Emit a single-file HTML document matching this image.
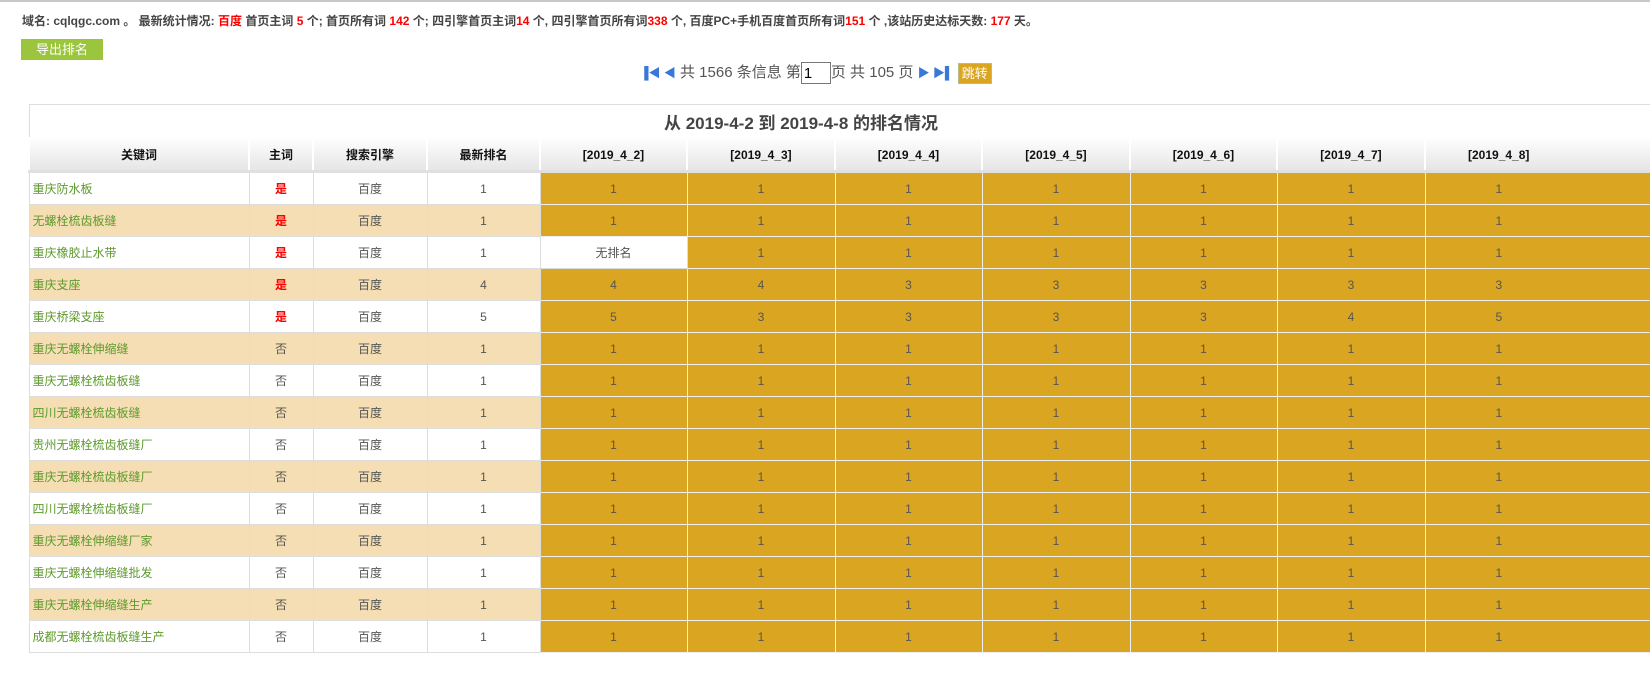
<!DOCTYPE html>
<html><head><meta charset="utf-8"><style>
body{margin:0;width:1650px;height:688px;overflow:hidden;background:#fff;font-family:"Liberation Sans","Noto Sans CJK SC",sans-serif;font-size:12px;color:#333;position:relative;border-top:2px solid #c8c8c8;box-sizing:border-box}
.info{position:absolute;left:22px;top:10px;font-weight:bold;font-size:12px;color:#444;white-space:nowrap}
.r{color:#f00}
.btn{position:absolute;left:21px;top:37px;width:82px;height:21px;background:#9ac53d;color:#fff;font-size:13px;text-align:center;line-height:21px}
.pager{position:absolute;left:640px;top:60px;font-size:15px;color:#555;white-space:nowrap;height:22px;line-height:22px}
.pager input{width:30px;font-size:15px;padding:0 2px;vertical-align:middle;margin:0;box-sizing:border-box;height:22px;border:1px solid #777}
.tri{color:#3a78d8;font-size:12px}
.jump{display:inline-block;background:#daa520;color:#fff;font-size:13px;padding:0 3px;line-height:19px;border:1px solid #bb8;vertical-align:middle}
table{position:absolute;left:28px;top:102px;border-collapse:collapse;width:1700px;table-layout:fixed}
td,th{border:1px solid #ddd;text-align:center;height:31px;padding:0;font-size:12px;color:#555}
th{background:linear-gradient(#fdfdfd,#e6e6e6);color:#111;font-weight:bold;font-size:12px;border:2px solid #fff;border-bottom:3px solid #e0e0e0}
.title{font-size:17px;font-weight:bold;color:#444;height:32px;border-color:#ddd}
td.k{text-align:left;padding-left:3px;color:#5d9a2c}
td.y{color:#f00;font-weight:bold}
tr.w td{background:#f5deb3}
td.g{background:#daa520!important;color:#555;border-color:#eee}
td.l{text-align:left;padding-left:70px}
</style></head><body>
<div class="info">域名: cqlqgc.com 。 最新统计情况: <span class="r">百度</span> 首页主词 <span class="r">5</span> 个; 首页所有词 <span class="r">142</span> 个; 四引擎首页主词<span class="r">14</span> 个, 四引擎首页所有词<span class="r">338</span> 个, 百度PC+手机百度首页所有词<span class="r">151</span> 个 ,该站历史达标天数: <span class="r">177</span> 天。</div>
<div class="btn">导出排名</div>
<div class="pager"><span class="tri">▐◀ ◀</span> 共 1566 条信息 第<input value="1">页 共 105 页 <span class="tri">▶ ▶▌</span> <span class="jump">跳转</span></div>
<table>
<colgroup><col style="width:220px"><col style="width:64px"><col style="width:114px"><col style="width:113px"><col style="width:147px"><col style="width:148px"><col style="width:147px"><col style="width:148px"><col style="width:147px"><col style="width:148px"><col style="width:304px"></colgroup>
<tr><td colspan="11" class="title"><span style="position:relative;left:-78px">从 2019-4-2 到 2019-4-8 的排名情况</span></td></tr>
<tr><th>关键词</th><th>主词</th><th>搜索引擎</th><th>最新排名</th><th>[2019_4_2]</th><th>[2019_4_3]</th><th>[2019_4_4]</th><th>[2019_4_5]</th><th>[2019_4_6]</th><th>[2019_4_7]</th><th style="text-align:left;padding-left:42px">[2019_4_8]</th></tr>
<tr><td class="k">重庆防水板</td><td class="y">是</td><td>百度</td><td>1</td><td class="g">1</td><td class="g">1</td><td class="g">1</td><td class="g">1</td><td class="g">1</td><td class="g">1</td><td class="g l">1</td></tr>
<tr class="w"><td class="k">无螺栓梳齿板缝</td><td class="y">是</td><td>百度</td><td>1</td><td class="g">1</td><td class="g">1</td><td class="g">1</td><td class="g">1</td><td class="g">1</td><td class="g">1</td><td class="g l">1</td></tr>
<tr><td class="k">重庆橡胶止水带</td><td class="y">是</td><td>百度</td><td>1</td><td>无排名</td><td class="g">1</td><td class="g">1</td><td class="g">1</td><td class="g">1</td><td class="g">1</td><td class="g l">1</td></tr>
<tr class="w"><td class="k">重庆支座</td><td class="y">是</td><td>百度</td><td>4</td><td class="g">4</td><td class="g">4</td><td class="g">3</td><td class="g">3</td><td class="g">3</td><td class="g">3</td><td class="g l">3</td></tr>
<tr><td class="k">重庆桥梁支座</td><td class="y">是</td><td>百度</td><td>5</td><td class="g">5</td><td class="g">3</td><td class="g">3</td><td class="g">3</td><td class="g">3</td><td class="g">4</td><td class="g l">5</td></tr>
<tr class="w"><td class="k">重庆无螺栓伸缩缝</td><td>否</td><td>百度</td><td>1</td><td class="g">1</td><td class="g">1</td><td class="g">1</td><td class="g">1</td><td class="g">1</td><td class="g">1</td><td class="g l">1</td></tr>
<tr><td class="k">重庆无螺栓梳齿板缝</td><td>否</td><td>百度</td><td>1</td><td class="g">1</td><td class="g">1</td><td class="g">1</td><td class="g">1</td><td class="g">1</td><td class="g">1</td><td class="g l">1</td></tr>
<tr class="w"><td class="k">四川无螺栓梳齿板缝</td><td>否</td><td>百度</td><td>1</td><td class="g">1</td><td class="g">1</td><td class="g">1</td><td class="g">1</td><td class="g">1</td><td class="g">1</td><td class="g l">1</td></tr>
<tr><td class="k">贵州无螺栓梳齿板缝厂</td><td>否</td><td>百度</td><td>1</td><td class="g">1</td><td class="g">1</td><td class="g">1</td><td class="g">1</td><td class="g">1</td><td class="g">1</td><td class="g l">1</td></tr>
<tr class="w"><td class="k">重庆无螺栓梳齿板缝厂</td><td>否</td><td>百度</td><td>1</td><td class="g">1</td><td class="g">1</td><td class="g">1</td><td class="g">1</td><td class="g">1</td><td class="g">1</td><td class="g l">1</td></tr>
<tr><td class="k">四川无螺栓梳齿板缝厂</td><td>否</td><td>百度</td><td>1</td><td class="g">1</td><td class="g">1</td><td class="g">1</td><td class="g">1</td><td class="g">1</td><td class="g">1</td><td class="g l">1</td></tr>
<tr class="w"><td class="k">重庆无螺栓伸缩缝厂家</td><td>否</td><td>百度</td><td>1</td><td class="g">1</td><td class="g">1</td><td class="g">1</td><td class="g">1</td><td class="g">1</td><td class="g">1</td><td class="g l">1</td></tr>
<tr><td class="k">重庆无螺栓伸缩缝批发</td><td>否</td><td>百度</td><td>1</td><td class="g">1</td><td class="g">1</td><td class="g">1</td><td class="g">1</td><td class="g">1</td><td class="g">1</td><td class="g l">1</td></tr>
<tr class="w"><td class="k">重庆无螺栓伸缩缝生产</td><td>否</td><td>百度</td><td>1</td><td class="g">1</td><td class="g">1</td><td class="g">1</td><td class="g">1</td><td class="g">1</td><td class="g">1</td><td class="g l">1</td></tr>
<tr><td class="k">成都无螺栓梳齿板缝生产</td><td>否</td><td>百度</td><td>1</td><td class="g">1</td><td class="g">1</td><td class="g">1</td><td class="g">1</td><td class="g">1</td><td class="g">1</td><td class="g l">1</td></tr>
</table>
</body></html>
